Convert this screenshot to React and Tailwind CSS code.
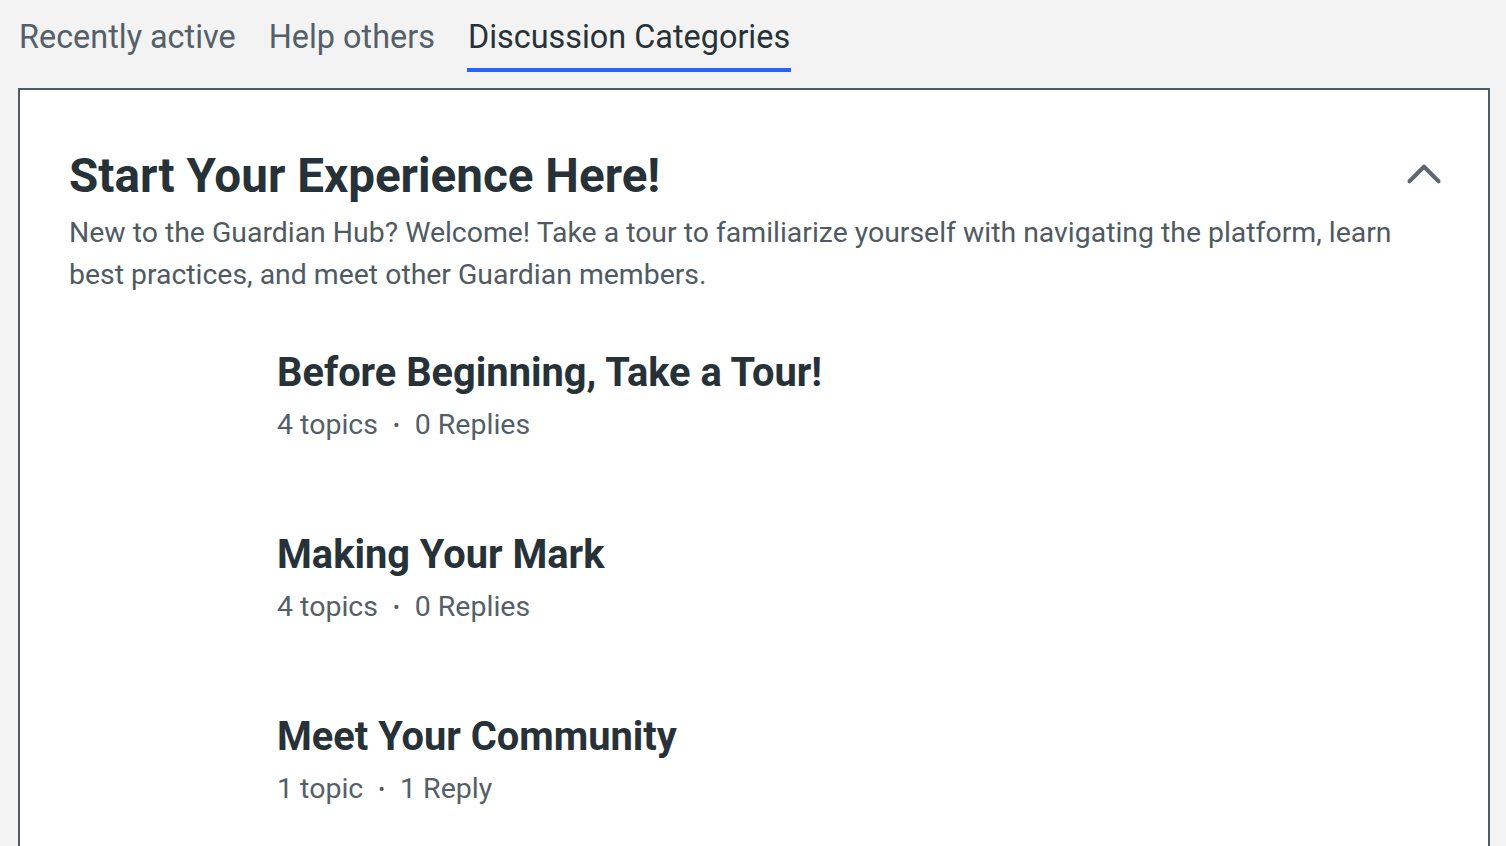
import { ChevronUp } from "lucide-react";

const tabs = [
  { label: "Recently active", active: false },
  { label: "Help others", active: false },
  { label: "Discussion Categories", active: true },
];

const categories = [
  { title: "Before Beginning, Take a Tour!", topics: "4 topics", replies: "0 Replies" },
  { title: "Making Your Mark", topics: "4 topics", replies: "0 Replies" },
  { title: "Meet Your Community", topics: "1 topic", replies: "1 Reply" },
];

export default function App() {
  return (
    <div
      className="min-h-[846px] bg-[#f3f3f3] pl-[18px] pr-[16px] overflow-hidden"
      style={{ fontFamily: "Roboto, 'Open Sans', sans-serif" }}
    >
      {/* Tabs */}
      <div className="flex gap-[31px] h-[88px] items-start">
        {tabs.map((t) => (
          <div
            key={t.label}
            className={`pt-[16px] pb-[10px] px-[1px] text-[32.4px] leading-[42px] border-b-4 ${
              t.active
                ? "text-[#263238] border-[#2962ff]"
                : "text-[#546069] border-transparent"
            }`}
          >
            {t.label}
          </div>
        ))}
      </div>

      {/* Card */}
      <div className="bg-white border-2 border-[#4f5a62] pl-[49px] pr-[32px] pt-[57px] h-[800px]">
        <div className="flex items-start justify-between">
          <h1 className="text-[47.6px] leading-[58px] font-bold text-[#263238]">
            Start Your Experience Here!
          </h1>
          <ChevronUp size={58} strokeWidth={1.7} className="text-[#5f6672] -mt-[2px] mr-[3px]" />
        </div>
        <p className="text-[28.4px] leading-[42px] text-[#4f5a62] mt-[7px] pr-[40px]">
          New to the Guardian Hub? Welcome! Take a tour to familiarize yourself with navigating the
          platform, learn best practices, and meet other Guardian members.
        </p>

        <div className="pl-[208px] mt-[53px] flex flex-col gap-[86px]">
          {categories.map((c) => (
            <div key={c.title}>
              <h2 className="text-[39.8px] leading-[48px] font-bold text-[#263238]">{c.title}</h2>
              <div className="flex items-center text-[28.5px] leading-[40px] text-[#546069] mt-[8px]">
                <span>{c.topics}</span>
                <span className="mx-[15px] text-[20px]">•</span>
                <span>{c.replies}</span>
              </div>
            </div>
          ))}
        </div>
      </div>
    </div>
  );
}
